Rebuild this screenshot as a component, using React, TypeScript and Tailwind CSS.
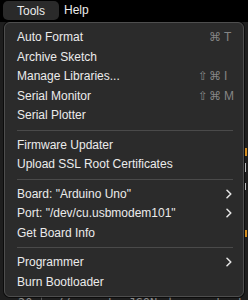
import React from "react";

type Item =
  | { kind: "item"; label: string; mods?: string; keyName?: string; sub?: boolean }
  | { kind: "sep" };

const items: Item[] = [
  { kind: "item", label: "Auto Format", mods: "⌘", keyName: "T" },
  { kind: "item", label: "Archive Sketch" },
  { kind: "item", label: "Manage Libraries...", mods: "⇧⌘", keyName: "I" },
  { kind: "item", label: "Serial Monitor", mods: "⇧⌘", keyName: "M" },
  { kind: "item", label: "Serial Plotter" },
  { kind: "sep" },
  { kind: "item", label: "Firmware Updater" },
  { kind: "item", label: "Upload SSL Root Certificates" },
  { kind: "sep" },
  { kind: "item", label: 'Board: "Arduino Uno"', sub: true },
  { kind: "item", label: 'Port: "/dev/cu.usbmodem101"', sub: true },
  { kind: "item", label: "Get Board Info" },
  { kind: "sep" },
  { kind: "item", label: "Programmer", sub: true },
  { kind: "item", label: "Burn Bootloader" },
];

function Chevron() {
  return (
    <svg width="6" height="10" viewBox="0 0 6 10" fill="none" className="block">
      <path d="M1 1.2L4.8 5L1 8.8" stroke="#e6e6e6" strokeWidth="1.5" strokeLinecap="round" strokeLinejoin="round" />
    </svg>
  );
}

export default function App() {
  return (
    <div
      className="relative w-[248px] h-[300px] overflow-hidden bg-[#1e1e1e] flex flex-col"
      style={{ fontFamily: '"Liberation Sans", "DejaVu Sans", sans-serif' }}
    >
      {/* menu bar */}
      <div className="h-[22px] shrink-0 bg-black flex items-start text-[12px] text-[#ececec]">
        <div className="ml-[3px] mt-[1px] h-[19px] px-[14px] rounded-[5px] bg-[#2a2a2a] flex items-center">
          Tools
        </div>
        <div className="ml-[5px] h-[20px] flex items-center">Help</div>
      </div>

      {/* editor behind */}
      <div className="flex-1 flex">
        <div className="w-[244px] flex flex-col justify-end">
          <div
            className="flex items-start h-[4px] overflow-visible text-[12px] leading-[14px] text-[#8a8a8a]"
            style={{ fontFamily: '"DejaVu Sans Mono", monospace' }}
          >
            <span className="ml-[18px] w-[34px]">20</span>
            <span className="w-[1px] h-[14px] bg-[#555]" />
            <span className="ml-[14px] whitespace-nowrap">// create JSON document st</span>
          </div>
        </div>
        <div className="w-[4px] flex flex-col items-start">
          <div className="mt-[126px] ml-[1px] w-[2px] h-[8px] bg-[#d08a1e]" />
          <div className="mt-[7px] ml-[1px] w-[1px] h-[9px] bg-[#bbbbbb]" />
          <div className="mt-[11px] ml-[1px] w-[1px] h-[7px] bg-[#bbbbbb]" />
          <div className="mt-[40px] ml-[1px] w-[2px] h-[7px] bg-[#d08a1e]" />
        </div>
      </div>

      {/* dropdown menu */}
      <div className="absolute left-[4px] top-[22px] w-[240px] rounded-[6px] border border-[#4e4e4e] bg-[#2b2b2b] pt-[4.5px] pb-[4px] pl-[12px] pr-[10px] text-[12px] text-[#ebebeb] shadow-[0_0_0_1px_rgba(0,0,0,0.6)]">
        {items.map((it, i) =>
          it.kind === "sep" ? (
            <div key={i} className="h-[10px] flex items-center">
              <div className="w-full h-[1px] bg-[#4a4a4a]" />
            </div>
          ) : (
            <div key={i} className="h-[19.5px] flex items-center">
              <span className="flex-1 whitespace-nowrap">{it.label}</span>
              {it.mods && (
                <span className="flex items-center text-[#858585]">
                  <span className="text-[12px] tracking-[1px]">{it.mods}</span>
                  <span className="ml-[2px] w-[9px]">{it.keyName}</span>
                </span>
              )}
              {it.sub && (
                <span className="mr-[1px]">
                  <Chevron />
                </span>
              )}
            </div>
          )
        )}
      </div>
    </div>
  );
}
